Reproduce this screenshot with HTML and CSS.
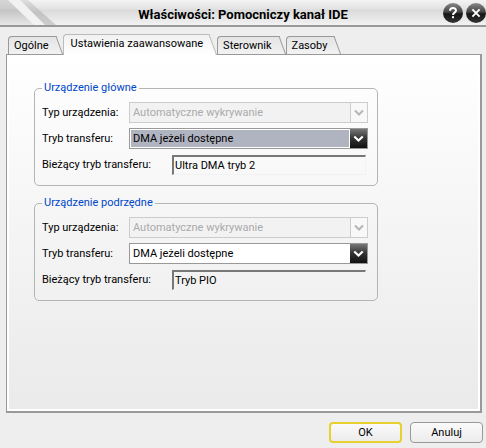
FILE: index.html
```html
<!DOCTYPE html>
<html lang="pl">
<head>
    <meta charset="UTF-8">
    <meta name="viewport" content="width=device-width, initial-scale=1.0">
    <title>Właściwości: Pomocniczy kanał IDE</title>
    <link rel="stylesheet" href="styles.css">
</head>
<body>
    <div class="window">
        <header class="titlebar">
            <svg class="shine" width="60" height="25" viewBox="0 0 60 25" aria-hidden="true">
                <defs>
                    <linearGradient id="grey" x1="0" y1="0" x2="0" y2="1">
                        <stop offset="0" stop-color="#d6d6d6"/>
                        <stop offset="0.36" stop-color="#cccccc"/>
                        <stop offset="0.4" stop-color="#c4c4c4"/>
                        <stop offset="1" stop-color="#e6e6e6"/>
                    </linearGradient>
                    <linearGradient id="band" x1="0" y1="0" x2="0" y2="1">
                        <stop offset="0" stop-color="#dedede"/>
                        <stop offset="0.5" stop-color="#c2c2c2"/>
                        <stop offset="1" stop-color="#cecece"/>
                    </linearGradient>
                </defs>
                <path d="M0 0H12L36 25H0Z" fill="url(#grey)"/>
                <path d="M20 0H28L56 25H44Z" fill="url(#band)"/>
                <path d="M8 0H20L45 25H34Z" fill="#f2f2f2"/>
            </svg>
            <h1 class="title">Właściwości: Pomocniczy kanał IDE</h1>
            <div class="winButtons">
                <button type="button" class="round" aria-label="Pomoc">
                    <svg width="20" height="20" viewBox="0 0 20 20" aria-hidden="true">
                        <path d="M7 7.8C7 4.2 13 4.2 13 7.5C13 9.6 10 9.6 10 12" fill="none" stroke="#fff" stroke-width="2"/>
                        <rect x="9" y="13.2" width="2" height="2" fill="#fff"/>
                    </svg>
                </button>
                <button type="button" class="round" aria-label="Zamknij">
                    <svg width="20" height="20" viewBox="0 0 20 20" aria-hidden="true">
                        <path d="M6.4 6.4L13.6 13.6M13.6 6.4L6.4 13.6" fill="none" stroke="#fff" stroke-width="2"/>
                    </svg>
                </button>
            </div>
        </header>

        <nav class="tabs" role="tablist">
            <button type="button" class="tab" role="tab"><span>Ogólne</span></button>
            <button type="button" class="tab active" role="tab" aria-selected="true"><span>Ustawienia zaawansowane</span></button>
            <button type="button" class="tab" role="tab"><span>Sterownik</span></button>
            <button type="button" class="tab" role="tab"><span>Zasoby</span></button>
        </nav>

        <form class="form">
            <main class="panel">
                <fieldset class="group">
                    <legend>Urządzenie główne</legend>
                    <div class="row">
                        <label for="type1">Typ urządzenia:</label>
                        <div class="combo disabled">
                            <select id="type1" disabled><option>Automatyczne wykrywanie</option></select>
                            <svg class="arrow" viewBox="0 0 16 18" aria-hidden="true"><path d="M4 7L8 11L12 7"/></svg>
                        </div>
                    </div>
                    <div class="row">
                        <label for="mode1">Tryb transferu:</label>
                        <div class="combo selected">
                            <select id="mode1"><option>DMA jeżeli dostępne</option></select>
                            <svg class="arrow" viewBox="0 0 16 18" aria-hidden="true"><path d="M4 7L8 11L12 7"/></svg>
                        </div>
                    </div>
                    <div class="row">
                        <label class="wide" for="current1">Bieżący tryb transferu:</label>
                        <input class="readout" id="current1" type="text" value="Ultra DMA tryb 2" readonly>
                    </div>
                </fieldset>

                <fieldset class="group">
                    <legend>Urządzenie podrzędne</legend>
                    <div class="row">
                        <label for="type2">Typ urządzenia:</label>
                        <div class="combo disabled">
                            <select id="type2" disabled><option>Automatyczne wykrywanie</option></select>
                            <svg class="arrow" viewBox="0 0 16 18" aria-hidden="true"><path d="M4 7L8 11L12 7"/></svg>
                        </div>
                    </div>
                    <div class="row">
                        <label for="mode2">Tryb transferu:</label>
                        <div class="combo">
                            <select id="mode2"><option>DMA jeżeli dostępne</option></select>
                            <svg class="arrow" viewBox="0 0 16 18" aria-hidden="true"><path d="M4 7L8 11L12 7"/></svg>
                        </div>
                    </div>
                    <div class="row">
                        <label class="wide" for="current2">Bieżący tryb transferu:</label>
                        <input class="readout" id="current2" type="text" value="Tryb PIO" readonly>
                    </div>
                </fieldset>
            </main>

            <footer class="actions">
                <button type="button" class="btn default">OK</button>
                <button type="button" class="btn">Anuluj</button>
            </footer>
        </form>
    </div>
</body>
</html>
```
FILE: styles.css
```css
*{
    box-sizing: border-box;
}
body{
    margin: 0;
    background-color: #eee;
}
body,button,select,input{
    font-family: Roboto, "Liberation Sans", sans-serif;
    font-size: 11px;
    line-height: 14px;
    color: #000;
}
.window{
    display: flex;
    flex-direction: column;
    min-height: 100vh;
}
/* title bar */
.titlebar{
    position: relative;
    display: flex;
    align-items: center;
    height: 27px;
    border-bottom: 2px solid #999;
    background: linear-gradient(#f4f4f4, #e2e2e2 36%, #dadada 40%, #f2f2f2);
}
.shine{
    position: absolute;
    left: 0;
    top: 0;
}
.title{
    flex: 1;
    margin: 0;
    padding-top: 4px;
    text-align: center;
    font-size: 13px;
    line-height: 16px;
    font-weight: bold;
}
.winButtons{
    position: absolute;
    right: 0;
    top: 3px;
    display: flex;
    gap: 3px;
}
.round{
    width: 20px;
    height: 20px;
    padding: 0;
    border: 0;
    border-radius: 50%;
    background: linear-gradient(#8a8a8a, #444 45%, #161616 55%, #333);
}
.round svg{
    display: block;
}
/* tabs */
.tabs{
    display: flex;
    align-items: flex-end;
    height: 27px;
    padding-left: 8px;
}
.tab{
    position: relative;
    height: 18px;
    padding: 2px 14px 0 6px;
    border: 0;
    background: none;
    white-space: nowrap;
}
.tab span{
    position: relative;
    z-index: 1;
}
.tab::before,.tab::after{
    content: "";
    position: absolute;
    top: 0;
    bottom: 0;
    border-top: 1px solid #999;
    background: linear-gradient(#e4e4e4, #f2f2f2);
}
.tab::before{
    left: 0;
    right: 12px;
    border-left: 1px solid #999;
    border-top-left-radius: 4px;
}
/* slanted right edge */
.tab::after{
    right: 0;
    width: 12px;
    border-right: 1px solid #999;
    transform: skewX(20deg);
    transform-origin: right bottom;
}
.tab.active{
    z-index: 1;
    height: 21px;
    margin-bottom: -1px;
    padding: 0 14px 1px 8px;
}
.tab.active::before,.tab.active::after{
    border-color: #bbb;
    background: linear-gradient(#f2f2f2, #fff);
}
/* panel */
.form{
    flex: 1;
    display: flex;
    flex-direction: column;
}
.panel{
    flex: 1;
    margin: 0 4px 0 6px;
    padding: 26px 102px 12px 25px;
    border: 1px solid #999;
    border-right-width: 2px;
    border-bottom-width: 2px;
    background: linear-gradient(#fff, #eaeaea);
    box-shadow: inset 0 0 0 2px #fff;
}
.group{
    min-width: 0;
    margin: 0 0 10px 2px;
    padding: 7px 9px 10px 7px;
    border: 1px solid #b4b4b4;
    border-radius: 5px;
}
.group legend{
    padding: 0 2px;
    color: #0046c8;
}
.row{
    display: flex;
    align-items: center;
    height: 21px;
    margin-bottom: 5px;
}
.row:last-child{
    margin-bottom: 0;
}
.row label{
    flex: none;
    width: 87px;
}
.row label.wide{
    width: 130px;
}
.combo{
    position: relative;
    flex: 1;
    height: 21px;
    padding: 1px 18px 1px 1px;
    border: 1px solid #999;
    background-color: #fff;
}
.combo select{
    appearance: none;
    display: block;
    width: 100%;
    height: 17px;
    padding: 0 2px;
    border: 0;
    border-radius: 0;
    background-color: transparent;
}
.combo.selected select{
    background-color: #b0b3c0;
}
.arrow{
    position: absolute;
    right: 0;
    top: 0;
    width: 17px;
    height: 19px;
    background: linear-gradient(#777, #333 50%, #111);
    pointer-events: none;
}
.arrow path{
    fill: none;
    stroke: #fff;
    stroke-width: 2;
}
.combo.disabled{
    border-color: #ccc;
    background-color: #f2f2f2;
}
.combo.disabled select{
    color: #aaa;
    opacity: 1;
}
.combo.disabled .arrow{
    border-left: 1px solid #ccc;
    background: #f8f8f8;
}
.combo.disabled .arrow path{
    stroke: #b5b5b5;
}
.readout{
    flex: 1;
    min-width: 0;
    height: 20px;
    margin-right: 2px;
    padding: 0 1px;
    border: 1px solid #f2f2f2;
    border-top: 2px solid #777;
    border-left: 2px solid #777;
    background-color: transparent;
}
/* buttons */
.actions{
    display: flex;
    justify-content: flex-end;
    gap: 8px;
    padding: 9px 3px 5px;
}
.btn{
    width: 73px;
    height: 21px;
    padding: 0;
    border: 1px solid #999;
    border-radius: 4px;
    background: linear-gradient(#fafafa, #ececec);
}
.btn.default{
    border: 2px solid #e8d030;
}
```
